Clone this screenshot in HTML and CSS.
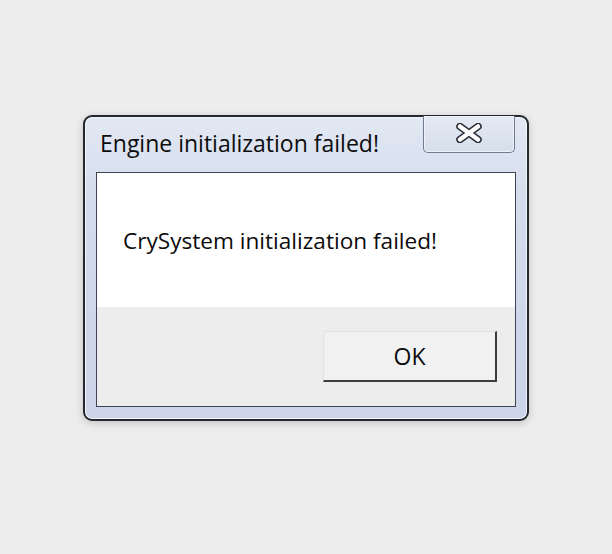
FILE: index.html
```html
<!DOCTYPE html>
<html>
<head>
<meta charset="utf-8">
<link rel="stylesheet" href="styles.css">
</head>
<body>
<div class="dialog">
  <div class="titlebar">
    <div class="title">Engine initialization failed!</div>
    <div class="close">
      <svg width="26" height="20" viewBox="0 0 26 20">
        <path d="M4 3.5 L22 16.5 M22 3.5 L4 16.5" stroke="#2b2f38" stroke-width="7.5" stroke-linecap="round" fill="none"/>
        <path d="M4 3.5 L22 16.5 M22 3.5 L4 16.5" stroke="#ffffff" stroke-width="4.5" stroke-linecap="round" fill="none"/>
      </svg>
    </div>
  </div>
  <div class="panel">
    <div class="message">CrySystem initialization failed!</div>
    <div class="footer">
      <button class="ok">OK</button>
    </div>
  </div>
</div>
</body>
</html>
```
FILE: styles.css
```css
html, body {
  margin: 0;
  padding: 0;
}
body {
  background: #ededed;
  width: 612px;
  height: 554px;
  overflow: hidden;
  font-family: "Open Sans", "Noto Sans", sans-serif;
  padding-top: 115px;
  padding-left: 83px;
  box-sizing: border-box;
}
.dialog {
  box-sizing: border-box;
  width: 446px;
  height: 306px;
  border: 2px solid #23272e;
  border-radius: 9px;
  background: linear-gradient(#e2e8f3, #d3dbec 30%, #cbd4e8);
  box-shadow: 0 2px 8px rgba(0,0,0,0.18), inset 0 0 0 1px #f2f5fb;
  display: flex;
  flex-direction: column;
  padding: 0 11px 12px 11px;
}
.titlebar {
  display: flex;
  align-items: flex-start;
  height: 55px;
  flex: none;
}
.title {
  font-size: 23px;
  color: #0c0c0c;
  padding-left: 4px;
  padding-top: 12px;
  line-height: 28px;
  white-space: nowrap;
}
.close {
  margin-left: auto;
  margin-right: 1px;
  margin-top: -1px;
  width: 92px;
  height: 37px;
  box-sizing: border-box;
  border: 1px solid #6f7b90;
  border-top: none;
  border-radius: 0 0 5px 5px;
  background: linear-gradient(#e4e9f3, #d6deec);
  box-shadow: inset 0 0 0 1px #eef2f8;
  display: flex;
  align-items: center;
  justify-content: center;
}
.close svg {
  display: block;
  margin-top: -2px;
}
.panel {
  flex: 1;
  border: 1px solid #3e4452;
  display: flex;
  flex-direction: column;
  background: #efefef;
}
.message {
  background: #ffffff;
  height: 134px;
  box-sizing: border-box;
  padding-left: 26px;
  padding-top: 54px;
  font-size: 22.6px;
  line-height: 28px;
  color: #0c0c0c;
  white-space: nowrap;
}
.footer {
  flex: 1;
  background: #ededed;
  display: flex;
  justify-content: flex-end;
  align-items: flex-start;
  padding-right: 18px;
  padding-top: 24px;
}
.ok {
  width: 174px;
  height: 51px;
  box-sizing: border-box;
  font-family: inherit;
  font-size: 23px;
  color: #0c0c0c;
  background: #f1f1f1;
  border-style: solid;
  border-width: 1px 2px 2px 1px;
  border-color: #e2e2e2 #3c3c3c #3c3c3c #e2e2e2;
  padding: 0;
  margin: 0;
}
```
